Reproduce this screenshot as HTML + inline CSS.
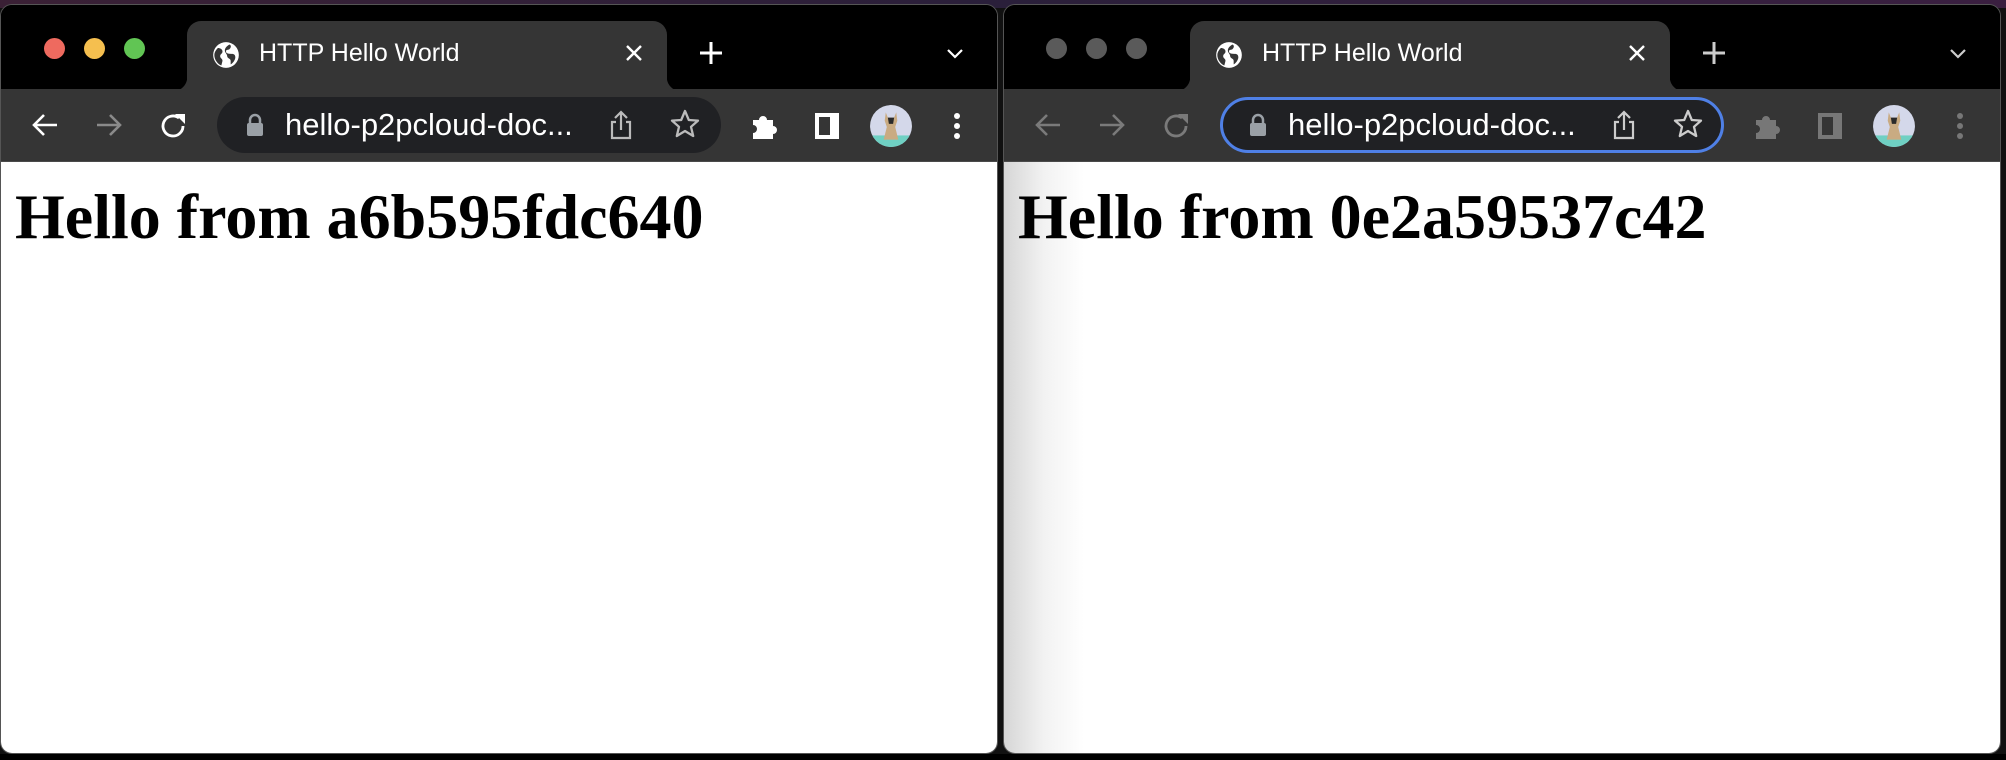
<!DOCTYPE html>
<html><head><meta charset="utf-8"><style>
*{margin:0;padding:0;box-sizing:border-box}
body{width:2006px;height:760px;background:#111;position:relative;overflow:hidden;font-family:"Liberation Sans",sans-serif}
.bgtop{position:absolute;left:0;top:0;width:2006px;height:8px;background:linear-gradient(90deg,#3a2035,#2a1f3a,#3a1f40)}
.bot{position:absolute;left:0;top:754px;width:2006px;height:6px;background:#000}
.win{position:absolute;top:4px;width:998px;height:750px;background:#000;border-radius:12px;overflow:hidden;border:1px solid #555}
.strip{position:absolute;left:0;top:0;width:100%;height:84px;background:#000}
.tl{position:absolute;top:33px;width:21px;height:21px;border-radius:50%}
.tab{position:absolute;left:186px;top:16px;width:480px;height:70px;background:#353535;border-radius:14px 14px 0 0}
.tab:before,.tab:after{content:"";position:absolute;bottom:0;width:14px;height:14px}
.tab:before{left:-14px;background:radial-gradient(circle at 0 0,transparent 14px,#353535 14.5px)}
.tab:after{right:-14px;background:radial-gradient(circle at 100% 0,transparent 14px,#353535 14.5px)}
.title{position:absolute;left:72px;top:18px;color:#fff;font-size:25px}
.tb{position:absolute;left:0;top:84px;width:100%;height:73px;background:#353535;border-bottom:1px solid #4a4a4a}
.omni{position:absolute;left:216px;top:8px;width:504px;height:56px;border-radius:28px;background:#202124}
.url{position:absolute;left:68px;top:10px;color:#fff;font-size:31px}
.content{position:absolute;left:0;top:157px;width:100%;height:600px;background:#fff}
h1{position:absolute;left:14px;top:18px;font-family:"Liberation Serif",serif;font-weight:bold;font-size:64px;color:#000;white-space:nowrap}
svg{position:absolute}
</style></head><body>
<div class="bgtop"></div>

<!-- LEFT WINDOW -->
<div class="win" style="left:0">
 <div class="strip"></div>
 <div class="tl" style="left:43px;background:#ee6a5f"></div>
 <div class="tl" style="left:83px;background:#f5bf4f"></div>
 <div class="tl" style="left:123px;background:#61c554"></div>
 <div class="tab">
  <svg style="left:25px;top:20px" width="28" height="28" viewBox="0 0 24 24"><circle cx="12" cy="12" r="11" fill="#fff"/><path d="M5 6c2 0 4 1 4 3s-2 2-2 4 2 2 2 4l-1 4C5 20 2 16 2 12c0-2 1-4 3-6zM15 3c2 1 1 3 0 4s-3 0-3 2 3 2 5 2 3 1 3 3c0 2-2 5-4 6l0-3c0-2-3-2-3-4s-2-3-2-5 2-4 4-5z" fill="#353535"/></svg>
  <div class="title">HTTP Hello World</div>
  <svg style="left:436px;top:21px" width="22" height="22" viewBox="0 0 22 22"><path d="M4 4L18 18M18 4L4 18" stroke="#fff" stroke-width="2.4"/></svg>
 </div>
 <svg style="left:696px;top:34px" width="28" height="28" viewBox="0 0 28 28"><path d="M14 3V25M3 14H25" stroke="#fff" stroke-width="3"/></svg>
 <svg style="left:944px;top:42px" width="20" height="14" viewBox="0 0 20 14"><path d="M3 3L10 10L17 3" stroke="#fff" stroke-width="2.2" fill="none"/></svg>
 <div class="tb">
  <svg style="left:30px;top:22px" width="28" height="28" viewBox="0 0 28 28"><path d="M26 14H4M13 4L3 14L13 24" stroke="#fff" stroke-width="2.6" fill="none"/></svg>
  <svg style="left:94px;top:22px" width="28" height="28" viewBox="0 0 28 28"><path d="M2 14H24M15 4L25 14L15 24" stroke="#8a8a8a" stroke-width="2.6" fill="none"/></svg>
  <svg style="left:158px;top:22px" width="30" height="30" viewBox="0 0 30 30"><path d="M24 15A10 10 0 1 1 20 7" stroke="#fff" stroke-width="2.8" fill="none"/><path d="M16 3H26V13Z" fill="#fff"/></svg>
  <div class="omni">
   <svg style="left:28px;top:16px" width="20" height="24" viewBox="0 0 20 24"><path d="M5 11V7a5 5 0 0 1 10 0v4" stroke="#9aa0a6" stroke-width="2.5" fill="none"/><rect x="2" y="10" width="16" height="13" rx="2" fill="#9aa0a6"/></svg>
   <div class="url">hello-p2pcloud-doc...</div>
   <svg style="left:390px;top:12px" width="28" height="32" viewBox="0 0 28 32"><path d="M9 13H5V29H23V13H19M14 21V3M8 9L14 3L20 9" stroke="#bbb" stroke-width="2.2" fill="none"/></svg>
   <svg style="left:452px;top:11px" width="32" height="32" viewBox="0 0 32 32"><path d="M16 3L19.8 12L29 12.6L22 18.8L24.2 28L16 23L7.8 28L10 18.8L3 12.6L12.2 12Z" stroke="#bbb" stroke-width="2.3" fill="none" stroke-linejoin="round"/></svg>
  </div>
  <svg style="left:749px;top:22px" width="30" height="30" viewBox="0 0 30 30"><path d="M3 9H9A4 4 0 0 1 17 9H23V15A4 4 0 0 1 23 23V28H3V22A4 4 0 0 0 3 14Z" fill="#fff"/></svg>
  <svg style="left:812px;top:22px" width="28" height="30" viewBox="0 0 28 30"><rect x="2" y="2" width="24" height="26" fill="#fff"/><rect x="6" y="6" width="11" height="18" fill="#353535"/></svg>
  <svg style="left:868px;top:15px" width="44" height="44" viewBox="0 0 42 42"><defs><clipPath id="c1"><circle cx="21" cy="21" r="20"/></clipPath></defs><g clip-path="url(#c1)"><rect width="42" height="42" fill="#d4d8ea"/><rect y="30" width="42" height="12" fill="#6fd0c3"/><path d="M16 8L18 13H24L26 8L27 16L25 22L28 34H14L17 22L15 16Z" fill="#c9ab82"/><path d="M18 13H24L23 19H19Z" fill="#2a2a2a"/></g></svg>
  <svg style="left:951px;top:22px" width="10" height="30" viewBox="0 0 10 30"><circle cx="5" cy="5" r="3" fill="#fff"/><circle cx="5" cy="15" r="3" fill="#fff"/><circle cx="5" cy="25" r="3" fill="#fff"/></svg>
 </div>
 <div class="content"><h1>Hello from a6b595fdc640</h1></div>
</div>

<!-- RIGHT WINDOW -->
<div class="win" style="left:1003px">
 <div class="strip"></div>
 <div class="tl" style="left:42px;background:#5a5a5a"></div>
 <div class="tl" style="left:82px;background:#5a5a5a"></div>
 <div class="tl" style="left:122px;background:#5a5a5a"></div>
 <div class="tab">
  <svg style="left:25px;top:20px" width="28" height="28" viewBox="0 0 24 24"><circle cx="12" cy="12" r="11" fill="#fff"/><path d="M5 6c2 0 4 1 4 3s-2 2-2 4 2 2 2 4l-1 4C5 20 2 16 2 12c0-2 1-4 3-6zM15 3c2 1 1 3 0 4s-3 0-3 2 3 2 5 2 3 1 3 3c0 2-2 5-4 6l0-3c0-2-3-2-3-4s-2-3-2-5 2-4 4-5z" fill="#353535"/></svg>
  <div class="title">HTTP Hello World</div>
  <svg style="left:436px;top:21px" width="22" height="22" viewBox="0 0 22 22"><path d="M4 4L18 18M18 4L4 18" stroke="#fff" stroke-width="2.4"/></svg>
 </div>
 <svg style="left:696px;top:34px" width="28" height="28" viewBox="0 0 28 28"><path d="M14 3V25M3 14H25" stroke="#ccc" stroke-width="3"/></svg>
 <svg style="left:944px;top:42px" width="20" height="14" viewBox="0 0 20 14"><path d="M3 3L10 10L17 3" stroke="#ccc" stroke-width="2.2" fill="none"/></svg>
 <div class="tb">
  <svg style="left:30px;top:22px" width="28" height="28" viewBox="0 0 28 28"><path d="M26 14H4M13 4L3 14L13 24" stroke="#7a7a7a" stroke-width="2.6" fill="none"/></svg>
  <svg style="left:94px;top:22px" width="28" height="28" viewBox="0 0 28 28"><path d="M2 14H24M15 4L25 14L15 24" stroke="#7a7a7a" stroke-width="2.6" fill="none"/></svg>
  <svg style="left:158px;top:22px" width="30" height="30" viewBox="0 0 30 30"><path d="M24 15A10 10 0 1 1 20 7" stroke="#7a7a7a" stroke-width="2.8" fill="none"/><path d="M16 3H26V13Z" fill="#7a7a7a"/></svg>
  <div class="omni" style="border:3px solid #4f80e6">
   <svg style="left:25px;top:13px" width="20" height="24" viewBox="0 0 20 24"><path d="M5 11V7a5 5 0 0 1 10 0v4" stroke="#9aa0a6" stroke-width="2.5" fill="none"/><rect x="2" y="10" width="16" height="13" rx="2" fill="#9aa0a6"/></svg>
   <div class="url" style="left:65px;top:7px">hello-p2pcloud-doc...</div>
   <svg style="left:387px;top:9px" width="28" height="32" viewBox="0 0 28 32"><path d="M9 13H5V29H23V13H19M14 21V3M8 9L14 3L20 9" stroke="#ccc" stroke-width="2.2" fill="none"/></svg>
   <svg style="left:449px;top:8px" width="32" height="32" viewBox="0 0 32 32"><path d="M16 3L19.8 12L29 12.6L22 18.8L24.2 28L16 23L7.8 28L10 18.8L3 12.6L12.2 12Z" stroke="#ccc" stroke-width="2.3" fill="none" stroke-linejoin="round"/></svg>
  </div>
  <svg style="left:749px;top:22px" width="30" height="30" viewBox="0 0 30 30"><path d="M3 9H9A4 4 0 0 1 17 9H23V15A4 4 0 0 1 23 23V28H3V22A4 4 0 0 0 3 14Z" fill="#777"/></svg>
  <svg style="left:812px;top:22px" width="28" height="30" viewBox="0 0 28 30"><rect x="2" y="2" width="24" height="26" fill="#777"/><rect x="6" y="6" width="11" height="18" fill="#353535"/></svg>
  <svg style="left:868px;top:15px" width="44" height="44" viewBox="0 0 42 42"><defs><clipPath id="c2"><circle cx="21" cy="21" r="20"/></clipPath></defs><g clip-path="url(#c2)"><rect width="42" height="42" fill="#d4d8ea"/><rect y="30" width="42" height="12" fill="#6fd0c3"/><path d="M16 8L18 13H24L26 8L27 16L25 22L28 34H14L17 22L15 16Z" fill="#c9ab82"/><path d="M18 13H24L23 19H19Z" fill="#2a2a2a"/></g></svg>
  <svg style="left:951px;top:22px" width="10" height="30" viewBox="0 0 10 30"><circle cx="5" cy="5" r="3" fill="#777"/><circle cx="5" cy="15" r="3" fill="#777"/><circle cx="5" cy="25" r="3" fill="#777"/></svg>
 </div>
 <div class="content" style="background:linear-gradient(90deg,#d6d6d6 0,#f2f2f2 40px,#fff 80px)"><h1>Hello from 0e2a59537c42</h1></div>
</div>
<div class="bot"></div>
</body></html>
